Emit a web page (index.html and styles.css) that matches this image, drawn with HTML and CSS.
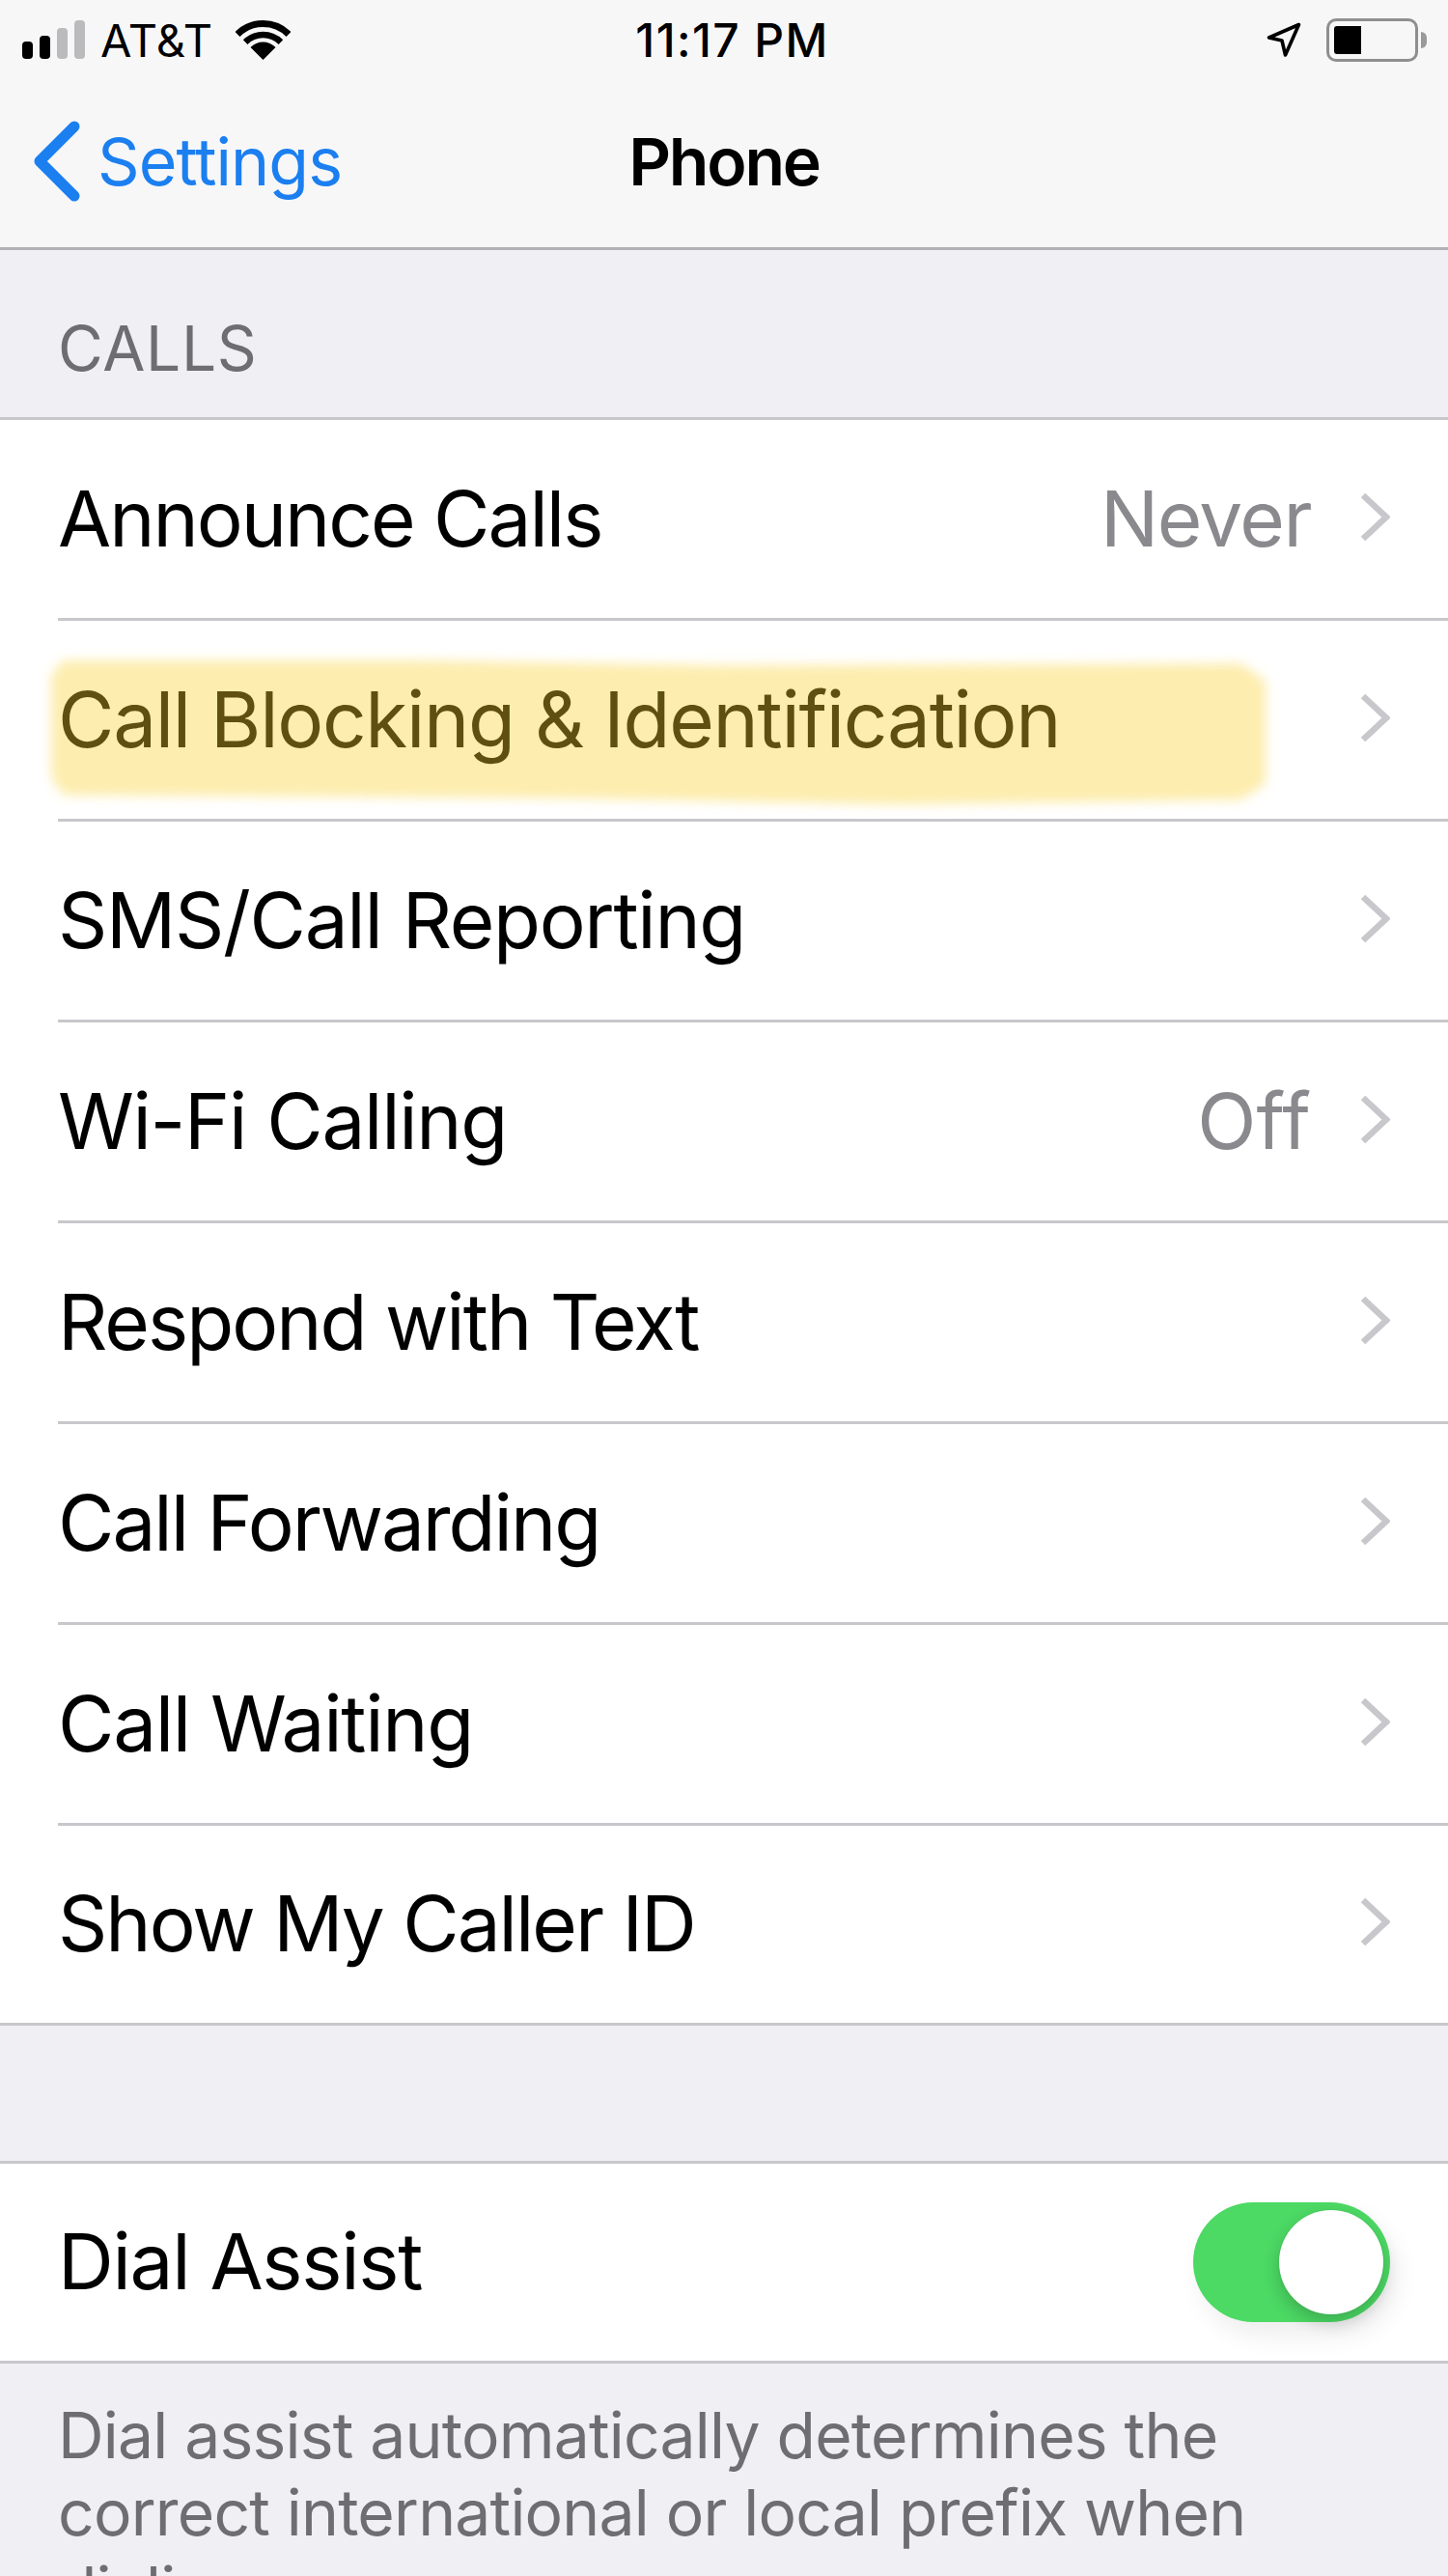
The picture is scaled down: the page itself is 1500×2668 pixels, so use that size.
FILE: index.html
```html
<!DOCTYPE html>
<html lang="en">
<head>
<meta charset="utf-8">
<title>Phone</title>
<link rel="stylesheet" href="styles.css">
</head>
<body>
<header class="bar">
  <div class="status">
    <div class="status-left">
      <div class="signal"><i class="b1"></i><i class="b2"></i><i class="b3 off"></i><i class="b4 off"></i></div>
      <span class="carrier">AT&amp;T</span>
      <svg class="wifi" viewBox="0 0 57 41"><path d="M2 14.5A37.5 37.5 0 0 1 55 14.5" fill="none" stroke="#000" stroke-width="7"/><path d="M10.1 22.6A26 26 0 0 1 46.9 22.6" fill="none" stroke="#000" stroke-width="6.5"/><path d="M28.5 41L15.5 28A18.4 18.4 0 0 1 41.5 28Z"/></svg>
    </div>
    <div class="time">11:17 PM</div>
    <div class="status-right">
      <svg class="loc" viewBox="0 0 36 37"><path d="M33.5 2.5L19.5 34L16 19L2.500 16Z" fill="none" stroke="#000" stroke-width="3.600" stroke-linejoin="round"/></svg>
      <div class="battery"><div class="level"></div></div>
      <div class="tip"></div>
    </div>
  </div>
  <div class="nav">
    <div class="back">
      <svg class="back-icon" viewBox="0 0 49 84"><path d="M43 6L7 42L43 78" fill="none" stroke="#1b7ff0" stroke-width="11" stroke-linecap="round" stroke-linejoin="round"/></svg>
      <span>Settings</span>
    </div>
    <div class="title">Phone</div>
    <div></div>
  </div>
</header>
<main>
  <div class="section-head">CALLS</div>
  <section class="group">
    <div class="row"><div class="row-body"><span class="label tight">Announce Calls</span><span class="value">Never</span><svg class="chev" viewBox="0 0 31 51"><path d="M3 3L27 25.500L3 48" fill="none" stroke="#c7c7cc" stroke-width="6.500"/></svg></div></div>
    <div class="row"><div class="row-body"><span class="label loose">Call Blocking &amp; Identification</span><svg class="chev" viewBox="0 0 31 51"><path d="M3 3L27 25.500L3 48" fill="none" stroke="#c7c7cc" stroke-width="6.500"/></svg></div><div class="marker"><div class="marker-ink"></div></div></div>
    <div class="row"><div class="row-body"><span class="label loose">SMS/Call Reporting</span><svg class="chev" viewBox="0 0 31 51"><path d="M3 3L27 25.500L3 48" fill="none" stroke="#c7c7cc" stroke-width="6.500"/></svg></div></div>
    <div class="row"><div class="row-body"><span class="label loose">Wi-Fi Calling</span><span class="value value-wide">Off</span><svg class="chev" viewBox="0 0 31 51"><path d="M3 3L27 25.500L3 48" fill="none" stroke="#c7c7cc" stroke-width="6.500"/></svg></div></div>
    <div class="row"><div class="row-body"><span class="label tight">Respond with Text</span><svg class="chev" viewBox="0 0 31 51"><path d="M3 3L27 25.500L3 48" fill="none" stroke="#c7c7cc" stroke-width="6.500"/></svg></div></div>
    <div class="row"><div class="row-body"><span class="label tight">Call Forwarding</span><svg class="chev" viewBox="0 0 31 51"><path d="M3 3L27 25.500L3 48" fill="none" stroke="#c7c7cc" stroke-width="6.500"/></svg></div></div>
    <div class="row"><div class="row-body"><span class="label loose">Call Waiting</span><svg class="chev" viewBox="0 0 31 51"><path d="M3 3L27 25.500L3 48" fill="none" stroke="#c7c7cc" stroke-width="6.500"/></svg></div></div>
    <div class="row"><div class="row-body"><span class="label tight">Show My Caller ID</span><svg class="chev" viewBox="0 0 31 51"><path d="M3 3L27 25.500L3 48" fill="none" stroke="#c7c7cc" stroke-width="6.500"/></svg></div></div>
  </section>
  <section class="group second">
    <div class="row"><div class="row-body"><span class="label loose">Dial Assist</span><div class="switch"><div class="thumb"></div></div></div></div>
  </section>
  <p class="foot">Dial assist automatically determines the<br>correct international or local prefix when<br>dialing.</p>
</main>
</body>
</html>
```
FILE: styles.css
```css
html, body {
  margin: 0;
  height: 2668px;
  overflow: hidden;
}
body {
  background: #efeff4;
  color: #000;
  font-family: Inter, "Liberation Sans", sans-serif;
}
.bar {
  background: #f7f7f8;
  border-bottom: 3px solid #b2b2b6;
  height: 256px;
}
.status {
  display: grid;
  grid-template-columns: 1fr auto 1fr;
  align-items: center;
  height: 82px;
  padding: 0 22px 0 23px;
}
.status-left, .status-right {
  display: flex;
  align-items: center;
}
.status-right { justify-content: flex-end; }
.signal {
  display: flex;
  align-items: flex-end;
  gap: 7px;
  height: 40px;
}
.signal i {
  display: block;
  width: 11px;
  background: #000;
  border-radius: 4px;
}
.signal .b1 { height: 18px; }
.signal .b2 { height: 24px; }
.signal .b3 { height: 32px; }
.signal .b4 { height: 40px; }
.signal .off { background: #bbbbbd; }
.carrier {
  margin-left: 16px;
  font-size: 47px;
  letter-spacing: 0.3px;
}
.wifi {
  width: 57px;
  height: 41px;
  margin-left: 24px;
}
.time {
  font-size: 48px;
  font-weight: 500;
  letter-spacing: 1.4px;
  margin-left: 16px;
}
.loc {
  width: 36px;
  height: 37px;
  margin-right: 26px;
}
.battery {
  box-sizing: border-box;
  width: 95px;
  height: 45px;
  border: 3px solid #8f8f8f;
  border-radius: 10px;
  padding: 5px;
}
.level {
  width: 28px;
  height: 100%;
  background: #000;
  border-radius: 3px 0 0 3px;
}
.tip {
  width: 6px;
  height: 17px;
  margin-left: 3px;
  background: #9a9a9a;
  border-radius: 0 6px 6px 0;
}
.nav {
  display: grid;
  grid-template-columns: 1fr auto 1fr;
  align-items: center;
  height: 176px;
  padding: 0 34px;
  margin-top: -3px;
}
.back {
  display: flex;
  align-items: center;
  color: #1b7ff0;
  font-size: 68px;
  letter-spacing: -0.9px;
}
.back-icon {
  width: 49px;
  height: 84px;
  margin-right: 18px;
}
.title {
  font-size: 68px;
  font-weight: 600;
  letter-spacing: -2.2px;
}
.section-head {
  box-sizing: border-box;
  height: 173px;
  padding: 63px 0 0 60px;
  color: #6d6d72;
  font-size: 64px;
  line-height: 78px;
  letter-spacing: 0.7px;
}
.group {
  background: #fff;
  border-top: 3px solid #c8c7cc;
  border-bottom: 3px solid #c8c7cc;
}
.second { margin-top: 140px; }
.row {
  position: relative;
  padding-left: 60px;
}
.row-body {
  box-sizing: border-box;
  display: flex;
  align-items: center;
  height: 208px;
  padding-right: 60px;
  border-bottom: 3px solid #c8c7cc;
}
.row:last-child .row-body {
  border-bottom: 0;
  height: 204px;
}
.label {
  flex: 1;
  font-size: 80px;
  padding-bottom: 3px;
  letter-spacing: -1.6px;
}
.tight { letter-spacing: -2px; }
.loose { letter-spacing: -1.3px; }
.value {
  margin-right: 51px;
  padding-bottom: 3px;
  color: #8a8a8e;
  font-size: 80px;
  letter-spacing: -1.5px;
}
.value-wide { letter-spacing: 0.2px; }
.chev {
  width: 31px;
  height: 51px;
  margin-bottom: 5px;
}
.marker {
  position: absolute;
  left: 53px;
  top: 33px;
  width: 1258px;
  height: 162px;
  filter: blur(6px);
}
.marker-ink {
  height: 100%;
  background: rgba(250, 208, 42, 0.38);
  clip-path: polygon(1% 5%, 30% 5%, 55% 8%, 98% 7%, 100% 18%, 100% 84%, 98% 94%, 70% 97%, 42% 93%, 1% 91%, 0 80%, 0 14%);
}
.switch {
  position: relative;
  box-sizing: border-box;
  width: 204px;
  height: 124px;
  border-radius: 62px;
  background: #4cd964;
  box-shadow: 8px 14px 26px rgba(0, 0, 0, 0.07);
}
.thumb {
  position: absolute;
  top: 8px;
  right: 7px;
  width: 108px;
  height: 108px;
  border-radius: 50%;
  background: #fff;
  box-shadow: 0 8px 18px rgba(0, 0, 0, 0.2), 0 0 0 1px rgba(0, 0, 0, 0.04);
}
.foot {
  margin: 0;
  padding: 34px 60px 0;
  color: #6d6d72;
  font-size: 66px;
  line-height: 80px;
  letter-spacing: -0.8px;
}
```
